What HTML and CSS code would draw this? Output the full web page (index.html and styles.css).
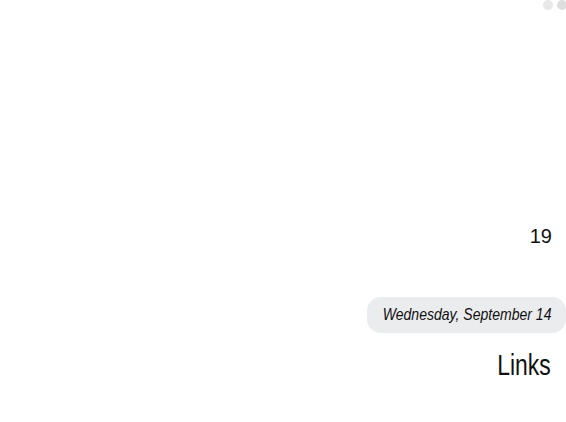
FILE: index.html
```html
<!DOCTYPE html>
<html>
<head>
<meta charset="utf-8">
<link rel="stylesheet" href="styles.css">
</head>
<body>
<div class="page">
  <div class="dots"><span class="dot"></span><span class="dot dot-b"></span></div>
  <div class="day">19</div>
  <div class="pill"><span class="pill-text">Wednesday, September 14</span></div>
  <div class="links"><span class="links-text">Links</span></div>
</div>
</body>
</html>
```
FILE: styles.css
```css
html, body { margin: 0; padding: 0; background: #fff; }
.page {
  width: 566px;
  height: 422px;
  overflow: hidden;
  display: flex;
  flex-direction: column;
  align-items: flex-end;
  font-family: "Liberation Sans", Arial, sans-serif;
  color: #111;
}
.dots { display: flex; gap: 4px; margin-right: -1px; margin-top: 0; }
.dot { width: 10px; height: 10px; border-radius: 50%; background: #e8e8e8; }
.dot-b { background: #dedede; }
.day {
  font-size: 20px;
  line-height: 20px;
  margin-top: 216px;
  margin-right: 14px;
}
.pill {
  margin-top: 51px;
  background: #ebecee;
  border-radius: 14px;
  height: 36px;
  box-sizing: border-box;
  padding: 0 15px 0 16px;
  display: flex;
  align-items: center;
  justify-content: flex-end;
  width: 199px;
}
.pill-text {
  display: inline-block;
  white-space: nowrap;
  font-style: italic;
  font-size: 17px;
  transform: scaleX(0.825);
  transform-origin: right center;
}
.links {
  margin-top: 16px;
  margin-right: 15px;
  font-size: 29px;
  line-height: 32px;
}
.links-text {
  display: inline-block;
  transform: scaleX(0.79);
  transform-origin: right center;
}
```
